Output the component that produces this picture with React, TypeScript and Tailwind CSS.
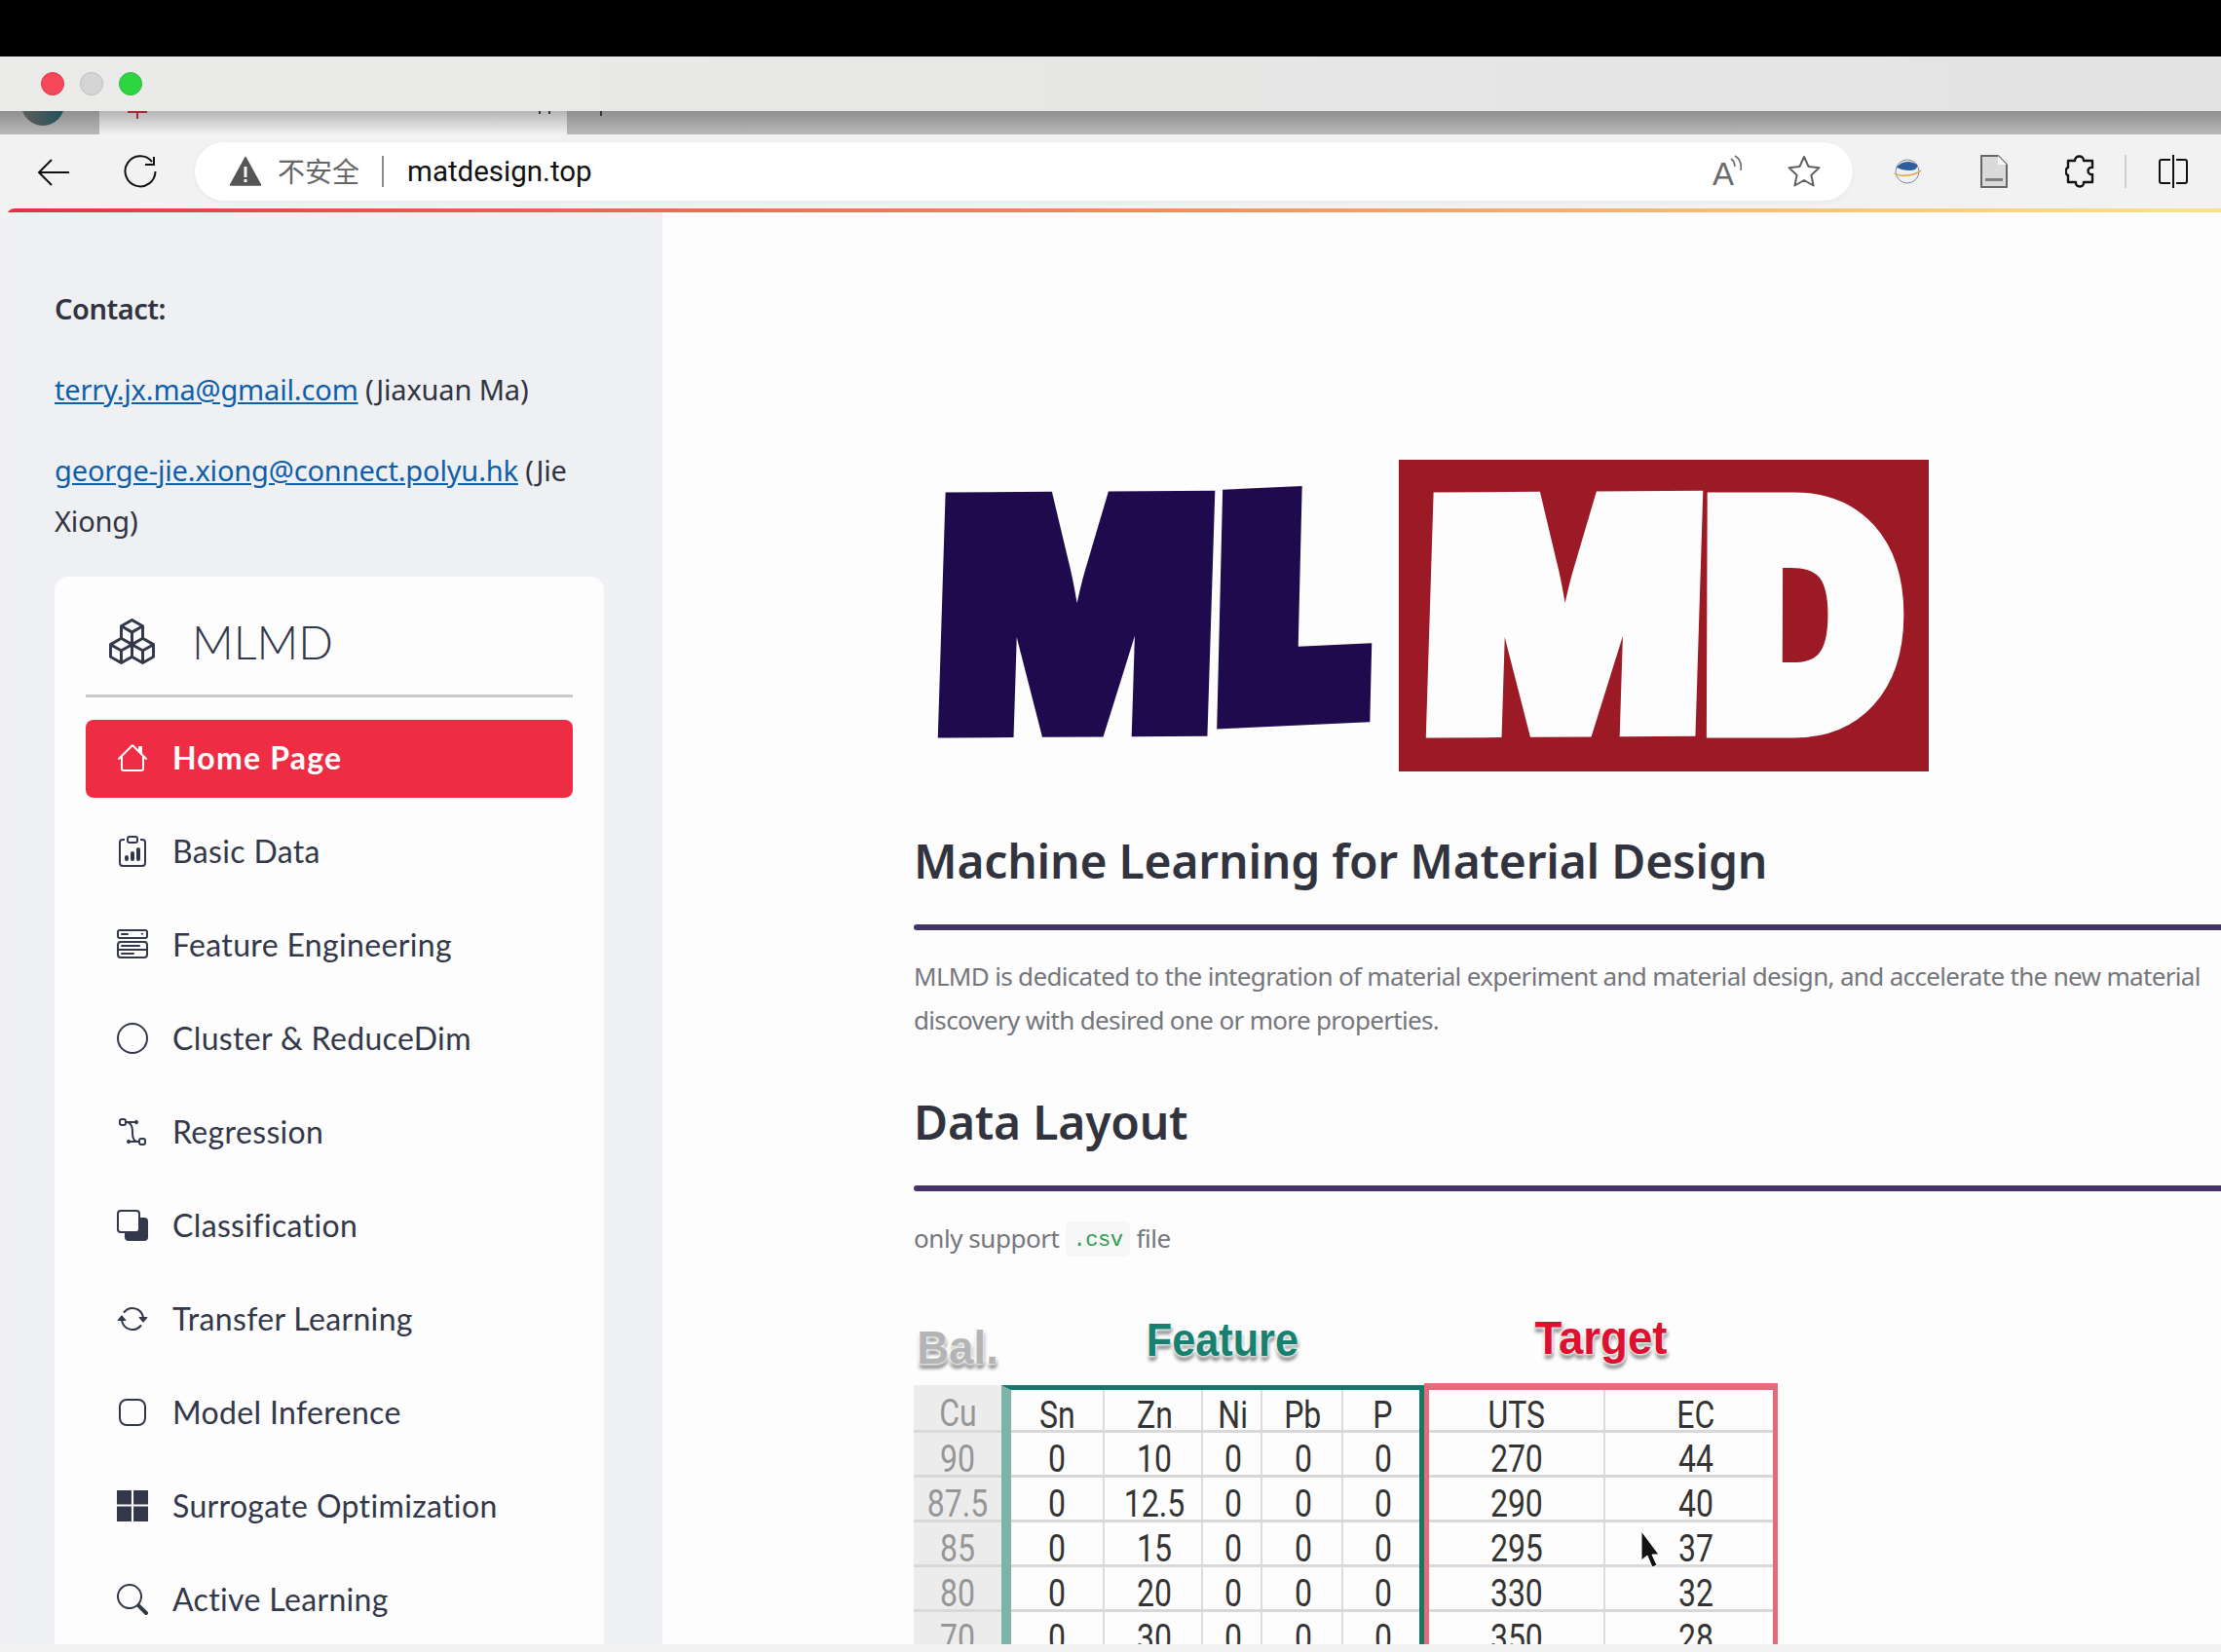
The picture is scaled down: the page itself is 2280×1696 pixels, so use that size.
import React from "react";
import { BsBoxes, BsHouse, BsClipboardData, BsMenuButtonWide, BsCircle, BsBezier2, BsSubtract, BsArrowRepeat, BsApp, BsMicrosoft, BsSearch } from "react-icons/bs";

const items = [
  { label: "Basic Data", Icon: BsClipboardData },
  { label: "Feature Engineering", Icon: BsMenuButtonWide },
  { label: "Cluster & ReduceDim", Icon: BsCircle },
  { label: "Regression", Icon: BsBezier2 },
  { label: "Classification", Icon: BsSubtract },
  { label: "Transfer Learning", Icon: BsArrowRepeat },
  { label: "Model Inference", Icon: BsApp },
  { label: "Surrogate Optimization", Icon: BsMicrosoft },
  { label: "Active Learning", Icon: BsSearch },
];

const featW = ["w-[96px]", "w-[101px] pl-[3px]", "w-[61px] pl-[3px]", "w-[83px] pl-[2px]", "w-[78px] pl-[3px]"];
const featRows = [
  ["Sn", "Zn", "Ni", "Pb", "P"],
  ["0", "10", "0", "0", "0"],
  ["0", "12.5", "0", "0", "0"],
  ["0", "15", "0", "0", "0"],
  ["0", "20", "0", "0", "0"],
  ["0", "30", "0", "0", "0"],
];
const cuRows = ["Cu", "90", "87.5", "85", "80", "70"];
const targetW = ["w-[181px]", "w-[172px] pl-[14px]"];
const targetRows = [
  ["UTS", "EC"],
  ["270", "44"],
  ["290", "40"],
  ["295", "37"],
  ["330", "32"],
  ["350", "28"],
];

function Cell({ w, children }: { w: string; children: React.ReactNode }) {
  return (
    <div className={`${w} flex h-full shrink-0 items-center justify-center border-r-2 border-[#dcdcdc] pt-[12px] last:border-r-0`}>
      <span className="inline-block scale-x-[0.82] font-['Roboto'] text-[39px] font-normal leading-none text-[#333333]">{children}</span>
    </div>
  );
}

const glow = "[text-shadow:0_0_2px_#fff,0_0_4px_#fff,0_0_6px_#fff,0_5px_4px_#888,2px_3px_3px_#aaa]";

function DataTable() {
  return (
    <div className="relative mt-[55px] w-[890px] shrink-0">
      <div className="flex h-[71px] font-['Liberation_Sans'] text-[48px] font-bold leading-[50px]">
        <span className={`mt-[10px] w-[90px] scale-x-95 whitespace-nowrap text-center text-[#b4b4b4] ${glow}`}>Bal.</span>
        <span className={`mt-[2px] w-[434px] scale-x-90 pl-[22px] text-center text-[#17806f] ${glow}`}>Feature</span>
        <span className={`w-[363px] scale-x-95 text-center text-[#dd1030] ${glow}`}>Target</span>
      </div>
      <div className="flex items-start">
        <div className="mt-[2px] w-[90px] bg-[#ececec]">
          {cuRows.map((c, i) => (
            <div key={c} className={`flex ${i === 0 ? "h-[49px]" : "h-[46px]"} items-center justify-center border-b-[3px] border-[#d8d8d8] pt-[12px]`}>
              <span className="inline-block scale-x-[0.82] font-['Roboto'] text-[39px] font-normal leading-none text-[#969696]">{c}</span>
            </div>
          ))}
        </div>
        <div className="mt-[2px] border-l-[10px] border-r-[5px] border-t-[5px] border-l-[#7db4aa] border-r-[#13786a] border-t-[#13786a]">
          {featRows.map((r, i) => (
            <div key={i} className={`flex ${i === 0 ? "h-[44px]" : "h-[46px]"} border-b-[3px] border-[#d8d8d8]`}>
              {r.map((c, j) => (
                <Cell key={j} w={featW[j]}>{c}</Cell>
              ))}
            </div>
          ))}
        </div>
        <div className="border-x-[5px] border-t-[7px] border-[#e56b7a]">
          {targetRows.map((r, i) => (
            <div key={i} className={`flex ${i === 0 ? "h-[44px]" : "h-[46px]"} border-b-[3px] border-[#d8d8d8]`}>
              {r.map((c, j) => (
                <Cell key={j} w={targetW[j]}>{c}</Cell>
              ))}
            </div>
          ))}
        </div>
      </div>
      <svg className="absolute left-[746px] top-[222px] h-[38px] w-[20px]" viewBox="0 0 20 38">
        <path d="M1 1 L19 25 L12 25 L17 36 L12 38 L7 26 L1 31 Z" fill="#111" stroke="#fff" strokeWidth="1" />
      </svg>
    </div>
  );
}

function Logo() {
  const f = "[font-family:Inter] font-black";
  return (
    <svg className="block h-[340px] w-[1060px] shrink-0" viewBox="938 460 1060 340">
      <rect x="1436" y="472" width="544" height="320" fill="#9c1a26" />
      <g className={f} fontSize="100">
        <text transform="matrix(3 -0.02 -0.1 3.2 958 748)" fill="#1f0a4e" stroke="#1f0a4e" strokeWidth="6">M</text>
        <text transform="matrix(2.57 -0.12 -0.07 2.9 1253 731)" fill="#1f0a4e" stroke="#1f0a4e" strokeWidth="12">L</text>
        <text transform="matrix(3 -0.02 -0.1 3.2 1459 748)" fill="#fdfdfd" stroke="#fdfdfd" strokeWidth="6">M</text>
        <text transform="matrix(2.8 0 -0.01 3.12 1750 745)" fill="#fdfdfd" stroke="#fdfdfd" strokeWidth="8">D</text>
      </g>
    </svg>
  );
}

function Browser() {
  return (
    <>
      <div className="h-[58px] shrink-0 bg-black" />
      <div className="flex h-[56px] shrink-0 items-center bg-gradient-to-r from-[#ebebe9] to-[#e3e3e3] pl-[42px]">
        <div className="flex gap-[16px]">
          <span className="size-[24px] rounded-full border border-[#d93a48] bg-[#f54858]" />
          <span className="size-[24px] rounded-full border border-[#bcbcbc] bg-[#d5d5d5]" />
          <span className="size-[24px] rounded-full border border-[#2cb83e] bg-[#2bd63f]" />
        </div>
      </div>
      <div className="flex h-[24px] shrink-0 bg-gradient-to-b from-[#8f8f8f] to-[#b9b9b9]">
        <div className="relative w-[102px] overflow-hidden rounded-br-[8px]">
          <span className="absolute -top-[29px] left-[22px] size-[44px] rounded-full bg-gradient-to-r from-[#5e5e58] to-[#17505c]" />
        </div>
        <div className="relative w-[480px] bg-gradient-to-b from-[#b5b5b5] to-[#f1f1f1]">
          <span className="absolute left-[29px] top-0 h-[7px] w-[20px] border-t-2 border-[#a8293a]" />
          <span className="absolute left-[38px] top-0 h-[8px] w-[2px] bg-[#a8293a]" />
          <span className="absolute left-[451px] top-0 h-[3px] w-[2px] bg-[#333]" />
          <span className="absolute left-[461px] top-0 h-[3px] w-[2px] bg-[#333]" />
        </div>
        <div className="relative flex-1 rounded-bl-[8px]">
          <span className="absolute left-[34px] top-0 h-[5px] w-[2px] bg-[#333]" />
        </div>
      </div>
      <div className="flex h-[76px] shrink-0 items-start bg-[#f2f2f2] pt-[8px]">
        <svg className="ml-[38px] mt-[16px] h-[30px] w-[34px]" viewBox="0 0 34 30" fill="none" stroke="#111" strokeWidth="2">
          <path d="M33 15H2M15 2 2 15l13 13" />
        </svg>
        <svg className="ml-[55px] mt-[13px] h-[34px] w-[34px]" viewBox="0 0 34 34" fill="none" stroke="#111" strokeWidth="2">
          <path d="M29 7A15.5 15.5 0 1 0 32.5 17M31 2v8h-9" />
        </svg>
        <div className="ml-[39px] flex h-[60px] w-[1702px] items-center rounded-[30px] bg-white pl-[36px] shadow-[0_1px_5px_rgba(0,0,0,0.06)]">
          <svg className="h-[32px] w-[32px]" viewBox="0 0 32 32">
            <path d="M16 1.5 L31.5 30 H.5 Z" fill="#555" stroke="#555" strokeLinejoin="round" strokeWidth="1.5" />
            <rect x="14.5" y="11" width="3" height="11" fill="#f5f5f5" />
            <rect x="14.5" y="24" width="3" height="3" fill="#f5f5f5" />
          </svg>
          <span className="ml-[17px] pb-[2px] font-['Noto_Sans_CJK_SC'] text-[28px] text-[#666666]">不安全</span>
          <span className="ml-[23px] h-[32px] w-[2px] bg-[#8a8a8a]" />
          <span className="ml-[24px] font-['Roboto'] text-[29.5px] text-[#111111]">matdesign.top</span>
          <div className="ml-auto mr-[33px] flex items-center gap-[43px]">
            <svg className="h-[34px] w-[34px]" viewBox="0 0 34 34" fill="none" stroke="#6b6b6b" strokeWidth="1.6">
              <text x="0" y="31" fontSize="33" fill="#6b6b6b" stroke="none" className="[font-family:'Liberation_Sans'] font-light">A</text>
              <path d="M19 4c3 2 4 5 4 8M23 1c5 3 7 9 6 15" />
            </svg>
            <svg className="h-[34px] w-[34px]" viewBox="0 0 34 34" fill="none" stroke="#606060" strokeWidth="2" strokeLinejoin="round">
              <path d="M17 2l4.6 10 10.8 1.3-8 7.4 2.2 10.8L17 26l-9.6 5.5 2.2-10.8-8-7.4L12.4 12Z" />
            </svg>
          </div>
        </div>
        <svg className="ml-[40px] mt-[14px] h-[32px] w-[32px]" viewBox="0 0 32 32" fill="none">
          <circle cx="16" cy="16" r="12" fill="#eef2f6" stroke="#7d8aa0" strokeWidth="1" />
          <path d="M5 12c3-5 12-9 21-3 1 3-2 6-7 6-6 0-10-1-14-3Z" fill="#2f5d9c" />
          <path d="M1 17c7 4 22 3 30-3-2 7-25 10-30 3Z" fill="#e3a93a" />
        </svg>
        <svg className="ml-[59px] mt-[13px] h-[34px] w-[28px]" viewBox="0 0 28 34">
          <path d="M1 1H18L27 10V33H1Z" fill="#dadada" stroke="#666" strokeWidth="2" strokeLinejoin="round" />
          <path d="M18 1V10H27" fill="#f5f5f5" />
          <rect x="5" y="24" width="18" height="3" fill="#808080" />
        </svg>
        <svg className="ml-[59px] mt-[13px] h-[34px] w-[30px]" viewBox="0 0 30 34" fill="none" stroke="#111" strokeWidth="2.4" strokeLinejoin="round">
          <path d="M10 6c0-6 9-6 9 0h9v7c-6-1-6 8 0 7v8h-9c1 6-9 6-8 0H3v-7c-3 0-3-8 0-8V6Z" />
        </svg>
        <span className="ml-[31px] mt-[13px] h-[34px] w-[2px] bg-[#cfcfcf]" />
        <svg className="ml-[33px] mt-[13px] h-[34px] w-[30px]" viewBox="0 0 30 34" fill="none" stroke="#111" strokeWidth="2">
          <path d="M12 5H3a2 2 0 0 0-2 2v20a2 2 0 0 0 2 2h9M18 5h9a2 2 0 0 1 2 2v20a2 2 0 0 1-2 2h-9M15 0v34" />
        </svg>
      </div>
    </>
  );
}

export default function App() {
  return (
    <div className="flex h-[1696px] w-[2280px] flex-col overflow-hidden bg-[#f1f1f1]">
      <Browser />
      <div className="ml-[7px] flex h-[1474px] shrink-0 flex-col overflow-hidden rounded-tl-[8px] bg-[#fdfdfd]">
        <div className="h-[4px] shrink-0 bg-gradient-to-r from-[#e0324a] via-[#ee8a5e] to-[#f9e488]" />
        <div className="flex min-h-0 flex-1">
          <aside className="flex w-[673px] shrink-0 flex-col bg-[#eef0f4] pl-[49px] pr-[53px] pt-[73px] font-['Noto_Sans'] text-[29px] leading-[52px] text-[#31333f] tracking-[-0.15px]">
            <p className="shrink-0 font-semibold tracking-[-0.5px]">Contact:</p>
            <p className="mt-[31px] shrink-0"><span className="text-[#0f5ea8] underline">terry.jx.ma@gmail.com</span> (Jiaxuan Ma)</p>
            <p className="mt-[31px] shrink-0"><span className="text-[#0f5ea8] underline">george-jie.xiong@connect.polyu.hk</span> (Jie Xiong)</p>
            <nav className="mt-[31px] w-[564px] shrink-0 rounded-[14px] bg-[#fdfdfd] px-[32px] pb-[40px] pt-[12px] font-['Lato'] tracking-normal text-[#33374a]">
              <div className="flex h-[109px] items-center pl-[24px]">
                <BsBoxes className="size-[47px] shrink-0" />
                <span className="ml-[38px] text-[47px] font-light">MLMD</span>
              </div>
              <div className="h-[3px] bg-[#c9c9c9]" />
              <div className="mt-[23px] flex h-[80px] items-center rounded-[8px] bg-[#ee2d44] pb-[2px] pl-[32px] text-white">
                <BsHouse className="size-[32px] shrink-0" />
                <span className="ml-[25px] text-[32px] font-bold tracking-[1.2px]">Home Page</span>
              </div>
              {items.map(({ label, Icon }) => (
                <div key={label} className="mt-[16px] flex h-[80px] items-center pb-[2px] pl-[32px]">
                  <Icon className="size-[32px] shrink-0" />
                  <span className="ml-[25px] text-[32px] font-normal tracking-[0.35px]">{label}</span>
                </div>
              ))}
            </nav>
          </aside>
          <main className="flex min-w-0 flex-1 flex-col overflow-hidden pl-[258px] pt-[242px] font-['Noto_Sans']">
            <Logo />
            <h1 className="mt-[54px] h-[60px] shrink-0 whitespace-nowrap text-[48px] font-semibold leading-[60px] tracking-[-0.2px] text-[#31333f]">Machine Learning for Material Design</h1>
            <div className="mt-[35px] h-[6px] shrink-0 rounded-l-[3px] bg-[#453268]" />
            <p className="mt-[25px] w-[1335px] shrink-0 text-[26px] leading-[45px] tracking-[-0.67px] text-[#74767c]">
              MLMD is dedicated to the integration of material experiment and material design, and accelerate the new material discovery with desired one or more properties.
            </p>
            <h2 className="mt-[52px] h-[60px] shrink-0 text-[48px] font-semibold leading-[60px] tracking-[-0.2px] text-[#31333f]">Data Layout</h2>
            <div className="mt-[35px] h-[6px] shrink-0 rounded-l-[3px] bg-[#453268]" />
            <p className="mt-[26px] flex h-[45px] shrink-0 items-center text-[26px] tracking-[-0.45px] text-[#74767c]">
              only support
              <code className="mx-[7px] rounded-[6px] bg-[#f6f6f6] px-[7px] pt-[3px] font-['Liberation_Mono'] text-[22px] leading-[33px] text-[#2e9b4f]">.csv</code>
              file
            </p>
            <DataTable />
          </main>
        </div>
      </div>
    </div>
  );
}
